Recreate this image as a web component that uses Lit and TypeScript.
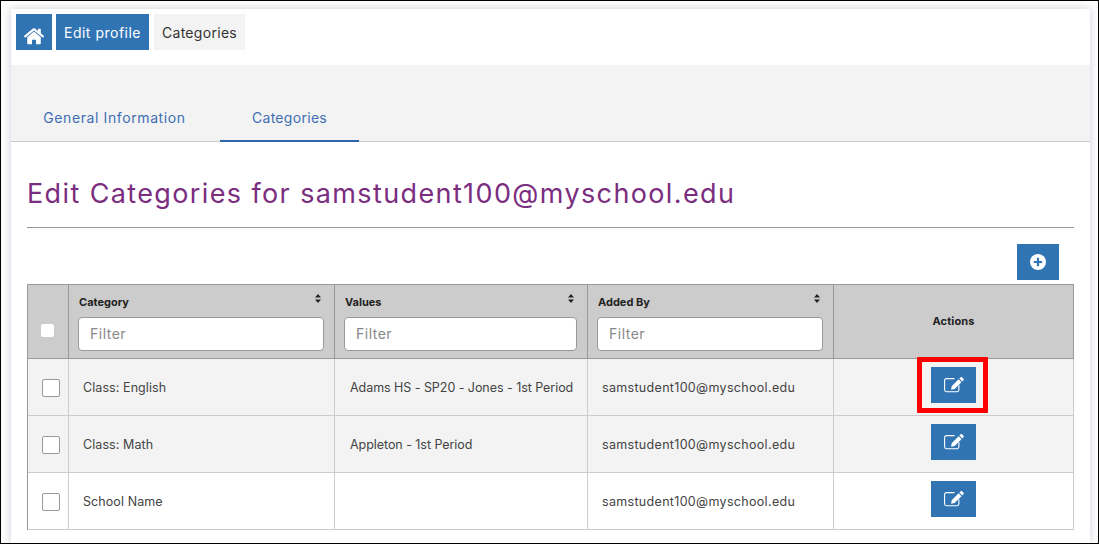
import { LitElement, html, css, svg } from 'lit';
import { customElement } from 'lit/decorators.js';

const rows = [
  { category: 'Class: English', values: 'Adams HS - SP20 - Jones - 1st Period', by: 'samstudent100@myschool.edu', marked: true },
  { category: 'Class: Math', values: 'Appleton - 1st Period', by: 'samstudent100@myschool.edu', marked: false },
  { category: 'School Name', values: '', by: 'samstudent100@myschool.edu', marked: false },
];

const homeIcon = svg`<svg width="20" height="17" viewBox="0 0 20 17"><path fill="#fff" d="M10 3.6 3.2 9.2V15.6c0 .4.3.7.7.7H8v-4.5h4v4.5h4.100c.4 0 .7-.3.700-.7V9.200z"/><path fill="#fff" d="M19.800 7.800 16.800 5.300V1.200c0-.2-.2-.4-.4-.4h-2c-.2 0-.4.2-.4.400v1.800L11 .6c-.6-.5-1.400-.5-2 0L.2 7.800c-.2.100-.2.400-.1.600l.8 1c.1.200.4.200.6.100L10 2.400l8.500 7.100c.2.100.5.100.6-.1l.8-1c.1-.2.100-.5-.1-.6z"/></svg>`;

const plusIcon = svg`<svg width="16" height="16" viewBox="0 0 16 16"><circle cx="8" cy="8" r="8" fill="#fff"/><path d="M8 3.800v8.400M3.800 8h8.400" stroke="#3174b4" stroke-width="2.200"/></svg>`;

const editIcon = svg`<svg width="20" height="16" viewBox="0 0 20 16"><path fill="none" stroke="#fff" stroke-width="1.100" d="M10.500 1.600H2.500C1.300 1.600.6 2.300.6 3.500v9.300c0 1.200.7 1.900 1.900 1.900h10.500c1.200 0 1.900-.7 1.900-1.900V8.200"/><path fill="#fff" d="M16.500.4c.5-.5 1.200-.5 1.700 0l1.200 1.200c.5.500.5 1.200 0 1.700l-1.100 1.100-2.900-2.900zM14.600 2.300l2.900 2.900-6.900 6.900-3.500.6.600-3.500z"/></svg>`;

const sortIcon = svg`<svg width="6" height="9" viewBox="0 0 6 9"><path fill="#222" d="M3 0 6 3.500H0zM0 5.500h6L3 9z"/></svg>`;

@customElement('app-root')
export class AppRoot extends LitElement {
  static override styles = css`
    :host {
      display: block;
      box-sizing: border-box;
      width: 1099px;
      height: 544px;
      overflow: hidden;
      background: #fff;
      border: 1px solid #000;
      padding: 8px 8px 0 10px;
      font-family: 'Inter', 'Liberation Sans', sans-serif;
      color: #444;
    }
    .page {
      background: #fff;
      height: 100%;
      box-shadow: 0 0 9px rgba(70, 70, 120, 0.28);
    }
    .crumbs {
      display: flex;
      gap: 4px;
      padding: 5px 5px 15px;
      height: 36px;
    }
    .crumb {
      display: flex;
      align-items: center;
      justify-content: center;
      height: 36px;
      font-size: 14px;
      background: #3174b4;
      color: #fff;
    }
    .crumb.home {
      width: 36px;
      padding-top: 8px;
      box-sizing: border-box;
    }
    .crumb.edit {
      width: 93px;
      letter-spacing: 0.5px;
    }
    .crumb.current {
      width: 91px;
      margin-left: 1px;
      background: #f3f3f3;
      color: #333;
      letter-spacing: 0.3px;
    }
    .tabs {
      display: flex;
      align-items: flex-end;
      height: 76px;
      background: #f3f3f3;
      border-bottom: 1px solid #ccc;
    }
    .tab {
      box-sizing: border-box;
      height: 46px;
      margin-bottom: -1px;
      display: flex;
      align-items: center;
      justify-content: center;
      padding-bottom: 3px;
      font-size: 14px;
      color: #3f6fb5;
    }
    .tab.first {
      width: 209px;
      padding-right: 2px;
      letter-spacing: 0.6px;
    }
    .tab.active {
      width: 139px;
      padding-bottom: 1px;
      border-bottom: 2px solid #2f65ad;
      letter-spacing: 0.3px;
    }
    .body {
      padding: 0 16px;
    }
    h1 {
      margin: 0;
      height: 86px;
      box-sizing: border-box;
      padding-top: 35px;
      font-size: 27px;
      line-height: 34px;
      font-weight: 400;
      letter-spacing: 1.38px;
      white-space: nowrap;
      color: #7b2d7f;
      border-bottom: 1px solid #999;
    }
    .toolbar {
      display: flex;
      justify-content: flex-end;
      padding: 16px 15px 4px 0;
    }
    .btn {
      display: flex;
      align-items: center;
      justify-content: center;
      background: #3174b4;
      border: 0;
      padding: 0;
    }
    .btn.add {
      width: 42px;
      height: 36px;
    }
    .btn.edit {
      width: 45px;
      height: 36px;
    }
    .table {
      display: grid;
      grid-template-columns: 41px 266px 253px 246px 240px;
      width: 1047px;
      border-top: 1px solid #999;
      border-left: 1px solid #999;
      box-sizing: border-box;
    }
    .th {
      box-sizing: border-box;
      height: 74px;
      background: #ccc;
      border-right: 1px solid #999;
      border-bottom: 1px solid #999;
      padding: 9px 10px 0 9px;
      color: #222;
      font-size: 11px;
      font-weight: 700;
    }
    .th.check {
      display: flex;
      align-items: center;
      justify-content: center;
      padding: 17px 1px 0 0;
    }
    .th.actions {
      display: flex;
      align-items: center;
      justify-content: center;
      padding: 0 0 2px;
      letter-spacing: 0.1px;
    }
    .th-label {
      display: flex;
      justify-content: space-between;
      height: 23px;
      padding: 0 3px 0 1px;
      line-height: 17px;
    }
    .filter {
      box-sizing: border-box;
      display: block;
      width: 100%;
      height: 34px;
      border: 1px solid #999;
      border-radius: 4px;
      background: #fff;
      padding: 0 11px 2px;
      font: 400 14px 'Inter', 'Liberation Sans', sans-serif;
      letter-spacing: 0.5px;
      outline: none;
    }
    .filter::placeholder {
      color: #888;
      opacity: 1;
    }
    .head-box {
      width: 13px;
      height: 13px;
      background: #fff;
      border-radius: 2px;
    }
    .td {
      box-sizing: border-box;
      display: flex;
      align-items: center;
      height: 57px;
      padding: 0 0 0 15px;
      font-size: 12.5px;
      letter-spacing: -0.05px;
      white-space: nowrap;
      color: #444;
      border-right: 1px solid #ccc;
      border-bottom: 1px solid #ccc;
    }
    .td.striped {
      background: #f3f3f3;
    }
    .td.name {
      padding-left: 14px;
      letter-spacing: 0.08px;
    }
    .td.email {
      padding-left: 14px;
      letter-spacing: 0.32px;
    }
    .td.center {
      justify-content: center;
      padding: 0;
    }
    .td.center.boxed {
      padding: 2px 0 0 6px;
    }
    .td.center.act {
      padding-bottom: 4px;
    }
    .box {
      box-sizing: border-box;
      width: 18px;
      height: 18px;
      background: #fff;
      border: 1px solid #999;
      border-radius: 2px;
    }
    .marked {
      position: relative;
    }
    .marked::after {
      content: '';
      position: absolute;
      left: 83px;
      top: -2px;
      width: 71px;
      height: 56px;
      box-sizing: border-box;
      border: 5px solid #f00;
      border-radius: 1px;
    }
  `;

  override render() {
    return html`
      <div class="page">
        <nav class="crumbs">
          <div class="crumb home">${homeIcon}</div>
          <div class="crumb edit">Edit profile</div>
          <div class="crumb current">Categories</div>
        </nav>
        <div class="tabs">
          <div class="tab first">General Information</div>
          <div class="tab active">Categories</div>
        </div>
        <div class="body">
          <h1>Edit Categories for samstudent100@myschool.edu</h1>
          <div class="toolbar">
            <button class="btn add">${plusIcon}</button>
          </div>
          <div class="table">
            <div class="th check"><div class="head-box"></div></div>
            ${['Category', 'Values', 'Added By'].map(
              (name) => html`
                <div class="th">
                  <div class="th-label"><span>${name}</span>${sortIcon}</div>
                  <input class="filter" placeholder="Filter" />
                </div>
              `
            )}
            <div class="th actions">Actions</div>
            ${rows.map((row, i) => {
              const bg = i < 2 ? 'striped' : '';
              return html`
                <div class="td center boxed ${bg}"><div class="box"></div></div>
                <div class="td name ${bg}">${row.category}</div>
                <div class="td ${bg}">${row.values}</div>
                <div class="td email ${bg}">${row.by}</div>
                <div class="td center act ${bg} ${row.marked ? 'marked' : ''}">
                  <button class="btn edit">${editIcon}</button>
                </div>
              `;
            })}
          </div>
        </div>
      </div>
    `;
  }
}
